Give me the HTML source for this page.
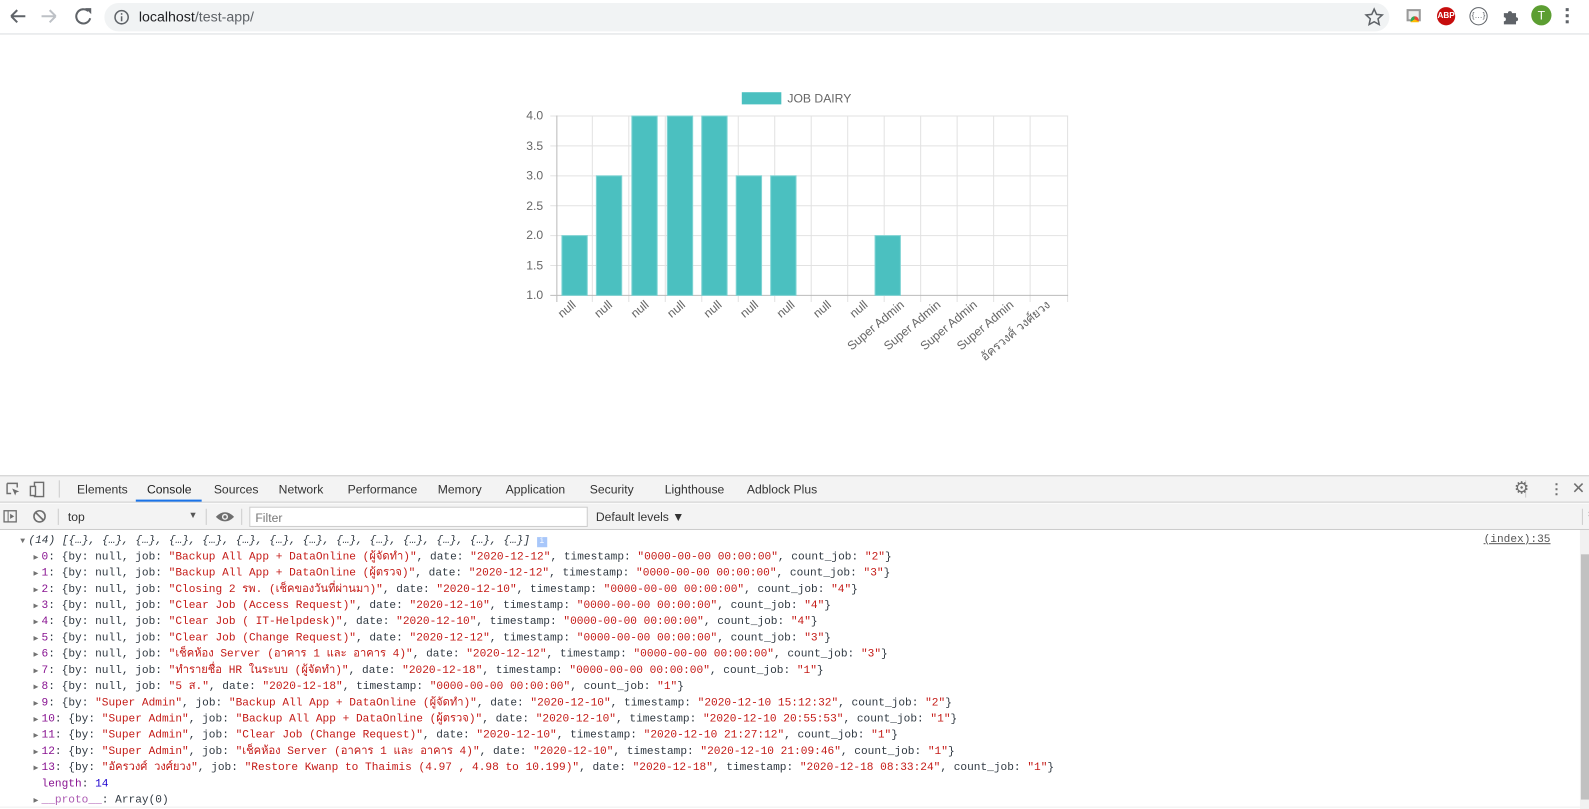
<!DOCTYPE html>
<html><head><meta charset="utf-8"><style>
*{margin:0;padding:0;box-sizing:border-box}
html,body{width:1589px;height:809px;overflow:hidden;background:#fff}
body{font-family:"Liberation Sans",sans-serif;position:relative}
#w{position:absolute;left:0;top:0;width:1568px;height:798px;transform:scale(1.01339);transform-origin:0 0}
.abs{position:absolute}
.tab{position:absolute;top:476px;font-size:12px;color:#333}
.con{position:absolute;left:0;top:523px;width:1579px;font-family:"Liberation Mono","DejaVu Sans Mono",monospace;font-size:11px;color:#303942}
.ln{position:absolute;left:33px;white-space:pre;height:16px;line-height:16px}
.tri{color:#727272;font-size:8px;display:inline-block;width:8px}
.i{color:#881391}.s{color:#c41a16}.n{color:#1c00cf}
</style></head><body><div id="w">
<div class="abs" style="left:0;top:0;width:1589px;height:34px;background:#fff;border-bottom:1px solid #dadce0"></div>
<svg class="abs" style="left:0;top:0" width="110" height="34">
<path d="M11 16h14M11 16l6-6M11 16l6 6" stroke="#5f6368" stroke-width="2" fill="none"/>
<path d="M41 16h14M55 16l-6-6M55 16l-6 6" stroke="#bdc1c6" stroke-width="2" fill="none"/>
<path d="M87 11a7 7 0 1 0 2 7" stroke="#5f6368" stroke-width="2" fill="none"/><path d="M84 8h6v6z" fill="#5f6368"/>
</svg>
<div class="abs" style="left:103px;top:3px;width:1268px;height:28px;border-radius:14px;background:#f1f3f4"></div>
<svg class="abs" style="left:110px;top:7px" width="20" height="20"><circle cx="10" cy="10" r="6.5" stroke="#5f6368" stroke-width="1.5" fill="none"/><path d="M10 9v5M10 6v1.5" stroke="#5f6368" stroke-width="1.5"/></svg>
<div class="abs" style="left:137px;top:8px;font-size:14px;color:#202124">localhost<span style="color:#5f6368">/test-app/</span></div>
<svg class="abs" style="left:1345px;top:6px" width="22" height="22"><path d="M11 3l2.4 5.2 5.6.6-4.2 3.8 1.2 5.6L11 15.4 6 18.2l1.2-5.6L3 8.8l5.6-.6z" stroke="#5f6368" stroke-width="1.5" fill="none"/></svg>
<div class="abs" style="left:1388px;top:9px;width:14px;height:12px;border:2px solid #999;background:#eee"></div>
<div class="abs" style="left:1392px;top:16px;width:8px;height:6px;background:conic-gradient(#ea4335 0 33%,#fbbc05 0 66%,#34a853 0);border-radius:4px 4px 0 0"></div>
<div class="abs" style="left:1418px;top:7px;width:18px;height:18px;border-radius:50%;background:#c70d0d;color:#fff;font-size:8px;font-weight:bold;text-align:center;line-height:18px">ABP</div>
<div class="abs" style="left:1450px;top:7px;width:18px;height:18px;border-radius:50%;border:1.5px solid #5f6368;font-size:8px;text-align:center;line-height:15px;color:#5f6368">{…}</div>
<svg class="abs" style="left:1481px;top:7px" width="18" height="18"><path d="M3 6h4a2 2 0 1 1 4 0h4v4a2 2 0 1 1 0 4v3H3v-3a2 2 0 1 0 0-4z" fill="#5f6368"/></svg>
<div class="abs" style="left:1511px;top:5px;width:20px;height:20px;border-radius:50%;background:#5c9e32;color:#fff;font-size:12px;text-align:center;line-height:20px">T</div>
<div class="abs" style="left:1545px;top:8px;width:3px;font-size:0"><div style="width:3px;height:3px;background:#5f6368;margin-bottom:3px"></div><div style="width:3px;height:3px;background:#5f6368;margin-bottom:3px"></div><div style="width:3px;height:3px;background:#5f6368"></div></div>

<svg class="abs" style="left:0;top:0" width="1589" height="470" font-family="Liberation Sans, sans-serif">
<rect x="732" y="91" width="39" height="12" fill="#4bc0c0"/>
<text x="777" y="101" font-size="12" fill="#666">JOB DAIRY</text>
<g stroke="#e2e2e2" stroke-width="1">
<line x1="549" y1="114.5" x2="1054" y2="114.5"/><line x1="549" y1="144" x2="1054" y2="144"/><line x1="549" y1="173.5" x2="1054" y2="173.5"/><line x1="549" y1="203" x2="1054" y2="203"/><line x1="549" y1="232.5" x2="1054" y2="232.5"/><line x1="549" y1="262" x2="1054" y2="262"/>
<line x1="584.5" y1="114" x2="584.5" y2="298"/><line x1="620.5" y1="114" x2="620.5" y2="298"/><line x1="656.5" y1="114" x2="656.5" y2="298"/><line x1="692.5" y1="114" x2="692.5" y2="298"/><line x1="728.5" y1="114" x2="728.5" y2="298"/><line x1="764.5" y1="114" x2="764.5" y2="298"/><line x1="800.5" y1="114" x2="800.5" y2="298"/><line x1="836.5" y1="114" x2="836.5" y2="298"/><line x1="872.5" y1="114" x2="872.5" y2="298"/><line x1="908.5" y1="114" x2="908.5" y2="298"/><line x1="944.5" y1="114" x2="944.5" y2="298"/><line x1="980.5" y1="114" x2="980.5" y2="298"/><line x1="1016.5" y1="114" x2="1016.5" y2="298"/><line x1="1053.5" y1="114" x2="1053.5" y2="298"/>
<line x1="543" y1="114.5" x2="549" y2="114.5"/><line x1="543" y1="144" x2="549" y2="144"/><line x1="543" y1="173.5" x2="549" y2="173.5"/><line x1="543" y1="203" x2="549" y2="203"/><line x1="543" y1="232.5" x2="549" y2="232.5"/><line x1="543" y1="262" x2="549" y2="262"/>
</g>
<line x1="549.5" y1="114" x2="549.5" y2="298" stroke="#bbb"/>
<line x1="543" y1="291.5" x2="1054" y2="291.5" stroke="#bbb"/>
<g fill="#4bc0c0" stroke="#7fd4d4" stroke-width="1">
<rect x="554.5" y="232.5" width="25" height="59"/>
<rect x="588.5" y="173.5" width="25" height="118"/>
<rect x="623.5" y="114.5" width="25" height="177"/>
<rect x="658.5" y="114.5" width="25" height="177"/>
<rect x="692.5" y="114.5" width="25" height="177"/>
<rect x="726.5" y="173.5" width="25" height="118"/>
<rect x="760.5" y="173.5" width="25" height="118"/>
<rect x="863.5" y="232.5" width="25" height="59"/>
</g>
<g font-size="12" fill="#666" text-anchor="end">
<text x="536" y="118">4.0</text><text x="536" y="148">3.5</text><text x="536" y="177">3.0</text><text x="536" y="207">2.5</text><text x="536" y="236">2.0</text><text x="536" y="266">1.5</text><text x="536" y="295">1.0</text>
</g>
<g font-size="12" fill="#666" text-anchor="end">
<text transform="translate(569,302) rotate(-40)">null</text>
<text transform="translate(605,302) rotate(-40)">null</text>
<text transform="translate(641,302) rotate(-40)">null</text>
<text transform="translate(677,302) rotate(-40)">null</text>
<text transform="translate(713,302) rotate(-40)">null</text>
<text transform="translate(749,302) rotate(-40)">null</text>
<text transform="translate(785,302) rotate(-40)">null</text>
<text transform="translate(821,302) rotate(-40)">null</text>
<text transform="translate(857,302) rotate(-40)">null</text>
<text transform="translate(893,302) rotate(-40)">Super Admin</text>
<text transform="translate(929,302) rotate(-40)">Super Admin</text>
<text transform="translate(965,302) rotate(-40)">Super Admin</text>
<text transform="translate(1001,302) rotate(-40)">Super Admin</text>
<text transform="translate(1037,302) rotate(-40)">อัครวงศ์ วงศ์ยวง</text>
</g>
</svg>

<div class="abs" style="left:0;top:469px;width:1589px;height:27px;background:#f3f3f3;border-top:1px solid #ccc;border-bottom:1px solid #ccc"></div>
<svg class="abs" style="left:4px;top:474px" width="44" height="18"><path d="M3 3h10v4M3 3v10h4" stroke="#6e6e6e" stroke-width="1.4" fill="none"/><path d="M8 8l7 3-3 1-1 3z" fill="#6e6e6e"/><rect x="30" y="2" width="9" height="14" stroke="#6e6e6e" stroke-width="1.4" fill="none"/><rect x="26" y="6" width="5" height="9" stroke="#6e6e6e" stroke-width="1.4" fill="#f3f3f3"/></svg>
<div class="abs" style="left:58px;top:474px;width:1px;height:17px;background:#ccc"></div>
<div class="tab" style="left:76px">Elements</div>
<div class="tab" style="left:145px;color:#222">Console</div>
<div class="abs" style="left:134px;top:493px;width:65px;height:2px;background:#1a73e8"></div>
<div class="tab" style="left:211px">Sources</div>
<div class="tab" style="left:275px">Network</div>
<div class="tab" style="left:343px">Performance</div>
<div class="tab" style="left:432px">Memory</div>
<div class="tab" style="left:499px">Application</div>
<div class="tab" style="left:582px">Security</div>
<div class="tab" style="left:656px">Lighthouse</div>
<div class="tab" style="left:737px">Adblock Plus</div>
<div class="abs" style="left:1505px;top:474px;width:1px;height:17px;background:#ccc"></div>
<div class="abs" style="left:1494px;top:472px;font-size:17px;color:#6e6e6e">⚙</div>
<div class="abs" style="left:1529px;top:474px;font-size:14px;color:#6e6e6e;font-weight:bold">⋮</div>
<div class="abs" style="left:1551px;top:472px;font-size:16px;color:#6e6e6e">✕</div>

<div class="abs" style="left:0;top:497px;width:1589px;height:26px;background:#f3f3f3;border-bottom:1px solid #ccc"></div>
<svg class="abs" style="left:3px;top:501px" width="50" height="18"><rect x="1" y="3" width="12" height="11" stroke="#6e6e6e" stroke-width="1.3" fill="none"/><line x1="5" y1="3" x2="5" y2="14" stroke="#6e6e6e"/><path d="M7 6l4 2.5-4 2.5z" fill="#6e6e6e"/><circle cx="36" cy="8.5" r="5.5" stroke="#6e6e6e" stroke-width="1.6" fill="none"/><line x1="32" y1="4.5" x2="40" y2="12.5" stroke="#6e6e6e" stroke-width="1.6"/></svg>
<div class="abs" style="left:57px;top:502px;width:1px;height:16px;background:#ccc"></div>
<div class="abs" style="left:67px;top:503px;font-size:12px;color:#333">top</div>
<div class="abs" style="left:186px;top:503px;font-size:9px;color:#555">▼</div>
<div class="abs" style="left:203px;top:502px;width:1px;height:16px;background:#ccc"></div>
<svg class="abs" style="left:212px;top:502px" width="20" height="16"><path d="M1 8q9-9 18 0q-9 9-18 0z" fill="#6e6e6e"/><circle cx="10" cy="8" r="3" fill="#f3f3f3"/><circle cx="10" cy="8" r="1.6" fill="#6e6e6e"/></svg>
<div class="abs" style="left:238px;top:502px;width:1px;height:16px;background:#ccc"></div>
<div class="abs" style="left:246px;top:500px;width:334px;height:20px;background:#fff;border:1px solid #ccc;font-size:12px;color:#777;padding:3px 5px">Filter</div>
<div class="abs" style="left:588px;top:503px;font-size:12px;color:#333">Default levels ▼</div>
<div class="abs" style="left:1561px;top:502px;width:1px;height:16px;background:#ccc"></div>
<div class="abs" style="left:1566px;top:498px;font-size:17px;color:#6e6e6e">⚙</div>

<div class="abs" style="left:1464px;top:527px;font-family:'Liberation Mono',monospace;font-size:11px;color:#545454;text-decoration:underline">(index):35</div>
<div class="abs" style="left:1559px;top:523px;width:30px;height:286px;background:#fff"></div>
<div class="abs" style="left:1559px;top:523px;width:10px;height:286px;background:#f1f1f1"></div>
<div class="abs" style="left:1560px;top:547px;width:9px;height:242px;background:#c1c1c1"></div>
<div class="abs" style="left:0;top:796px;width:1559px;height:1px;background:#eee"></div>

<div class="con">
<div class="ln" style="top:3px;left:20px;font-style:italic"><span class="tri">▼</span>(14) [{…}, {…}, {…}, {…}, {…}, {…}, {…}, {…}, {…}, {…}, {…}, {…}, {…}, {…}] <span style="display:inline-block;width:10px;height:10px;background:#a8c7fa;color:#fff;font-size:8px;line-height:10px;text-align:center;font-style:normal">i</span></div>
<div class="ln" style="top:19px"><span class="tri">▶</span><span class="i">0</span>: {by: null, job: <span class="s">"Backup All App + DataOnline (ผู้จัดทำ)"</span>, date: <span class="s">"2020-12-12"</span>, timestamp: <span class="s">"0000-00-00 00:00:00"</span>, count_job: <span class="s">"2"</span>}</div>
<div class="ln" style="top:35px"><span class="tri">▶</span><span class="i">1</span>: {by: null, job: <span class="s">"Backup All App + DataOnline (ผู้ตรวจ)"</span>, date: <span class="s">"2020-12-12"</span>, timestamp: <span class="s">"0000-00-00 00:00:00"</span>, count_job: <span class="s">"3"</span>}</div>
<div class="ln" style="top:51px"><span class="tri">▶</span><span class="i">2</span>: {by: null, job: <span class="s">"Closing 2 รพ. (เช็คของวันที่ผ่านมา)"</span>, date: <span class="s">"2020-12-10"</span>, timestamp: <span class="s">"0000-00-00 00:00:00"</span>, count_job: <span class="s">"4"</span>}</div>
<div class="ln" style="top:67px"><span class="tri">▶</span><span class="i">3</span>: {by: null, job: <span class="s">"Clear Job (Access Request)"</span>, date: <span class="s">"2020-12-10"</span>, timestamp: <span class="s">"0000-00-00 00:00:00"</span>, count_job: <span class="s">"4"</span>}</div>
<div class="ln" style="top:83px"><span class="tri">▶</span><span class="i">4</span>: {by: null, job: <span class="s">"Clear Job ( IT-Helpdesk)"</span>, date: <span class="s">"2020-12-10"</span>, timestamp: <span class="s">"0000-00-00 00:00:00"</span>, count_job: <span class="s">"4"</span>}</div>
<div class="ln" style="top:99px"><span class="tri">▶</span><span class="i">5</span>: {by: null, job: <span class="s">"Clear Job (Change Request)"</span>, date: <span class="s">"2020-12-12"</span>, timestamp: <span class="s">"0000-00-00 00:00:00"</span>, count_job: <span class="s">"3"</span>}</div>
<div class="ln" style="top:115px"><span class="tri">▶</span><span class="i">6</span>: {by: null, job: <span class="s">"เช็คห้อง Server (อาคาร 1 และ อาคาร 4)"</span>, date: <span class="s">"2020-12-12"</span>, timestamp: <span class="s">"0000-00-00 00:00:00"</span>, count_job: <span class="s">"3"</span>}</div>
<div class="ln" style="top:131px"><span class="tri">▶</span><span class="i">7</span>: {by: null, job: <span class="s">"ทำรายชื่อ HR ในระบบ (ผู้จัดทำ)"</span>, date: <span class="s">"2020-12-18"</span>, timestamp: <span class="s">"0000-00-00 00:00:00"</span>, count_job: <span class="s">"1"</span>}</div>
<div class="ln" style="top:147px"><span class="tri">▶</span><span class="i">8</span>: {by: null, job: <span class="s">"5 ส."</span>, date: <span class="s">"2020-12-18"</span>, timestamp: <span class="s">"0000-00-00 00:00:00"</span>, count_job: <span class="s">"1"</span>}</div>
<div class="ln" style="top:163px"><span class="tri">▶</span><span class="i">9</span>: {by: <span class="s">"Super Admin"</span>, job: <span class="s">"Backup All App + DataOnline (ผู้จัดทำ)"</span>, date: <span class="s">"2020-12-10"</span>, timestamp: <span class="s">"2020-12-10 15:12:32"</span>, count_job: <span class="s">"2"</span>}</div>
<div class="ln" style="top:179px"><span class="tri">▶</span><span class="i">10</span>: {by: <span class="s">"Super Admin"</span>, job: <span class="s">"Backup All App + DataOnline (ผู้ตรวจ)"</span>, date: <span class="s">"2020-12-10"</span>, timestamp: <span class="s">"2020-12-10 20:55:53"</span>, count_job: <span class="s">"1"</span>}</div>
<div class="ln" style="top:195px"><span class="tri">▶</span><span class="i">11</span>: {by: <span class="s">"Super Admin"</span>, job: <span class="s">"Clear Job (Change Request)"</span>, date: <span class="s">"2020-12-10"</span>, timestamp: <span class="s">"2020-12-10 21:27:12"</span>, count_job: <span class="s">"1"</span>}</div>
<div class="ln" style="top:211px"><span class="tri">▶</span><span class="i">12</span>: {by: <span class="s">"Super Admin"</span>, job: <span class="s">"เช็คห้อง Server (อาคาร 1 และ อาคาร 4)"</span>, date: <span class="s">"2020-12-10"</span>, timestamp: <span class="s">"2020-12-10 21:09:46"</span>, count_job: <span class="s">"1"</span>}</div>
<div class="ln" style="top:227px"><span class="tri">▶</span><span class="i">13</span>: {by: <span class="s">"อัครวงศ์ วงศ์ยวง"</span>, job: <span class="s">"Restore Kwanp to Thaimis (4.97 , 4.98 to 10.199)"</span>, date: <span class="s">"2020-12-18"</span>, timestamp: <span class="s">"2020-12-18 08:33:24"</span>, count_job: <span class="s">"1"</span>}</div>
<div class="ln" style="top:243px;left:41px"><span class="i">length</span>: <span class="n">14</span></div>
<div class="ln" style="top:259px"><span class="tri">▶</span><span class="i" style="opacity:.7">__proto__</span>: Array(0)</div>
</div>
</div></body></html>
